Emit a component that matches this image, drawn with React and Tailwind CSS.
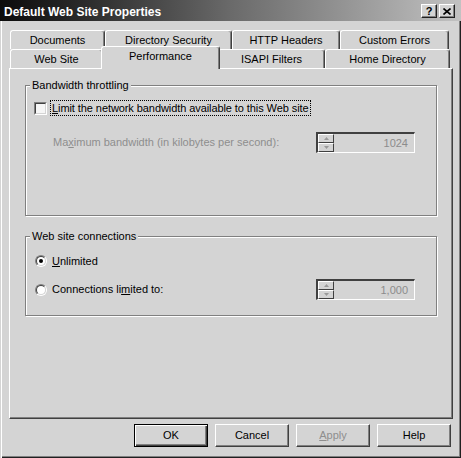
import React from "react";

// Win2000 style property sheet, grayscale

const SpinBtn = ({ up }) => (
  <div className="h-[9px] w-[16px] flex items-center justify-center bg-[#d4d4d4] border-t border-l border-r border-b border-t-white border-l-white border-r-[#404040] border-b-[#404040]">
    <svg width="5" height="3" viewBox="0 0 5 3">
      {up ? <path d="M2.5 0 L5 3 L0 3 Z" fill="#9a9a9a" /> : <path d="M0 0 L5 0 L2.5 3 Z" fill="#9a9a9a" />}
    </svg>
  </div>
);

const Spinner = ({ value }) => (
  <div className="ml-auto mr-[21px] w-[99px] h-[21px] flex border-t-2 border-l-2 border-t-[#404040] border-l-[#404040] border-r border-b border-r-white border-b-white">
    <div className="flex flex-col">
      <SpinBtn up />
      <SpinBtn />
    </div>
    <div className="flex-1 text-right pr-[6px] text-[#8c8c8c] text-[11px] leading-[18px]">{value}</div>
  </div>
);

const Radio = ({ checked }) => (
  <div className="w-[12px] h-[12px] rounded-full border border-t-[#808080] border-l-[#808080] border-b-white border-r-white flex items-center justify-center">
    <div className="w-[10px] h-[10px] rounded-full bg-white border border-t-[#404040] border-l-[#404040] border-b-[#d4d4d4] border-r-[#d4d4d4] flex items-center justify-center">
      {checked && <div className="w-[4px] h-[4px] rounded-full bg-black" />}
    </div>
  </div>
);

const Tab = ({ label, w, selected }) => {
  if (selected) {
    return (
      <div
        className={`${w} relative z-10 -mx-[2px] -mb-[1px] h-[23px] bg-[#d4d4d4] border-t border-l border-r border-t-white border-l-white border-r-[#404040] rounded-t-[3px] shadow-[inset_-1px_0_0_#808080] text-center text-[11px] leading-[13px] pt-[3px]`}
      >
        {label}
      </div>
    );
  }
  return (
    <div
      className={`${w} h-[19px] bg-[#d4d4d4] border-t border-l border-r border-t-white border-l-white border-r-[#404040] rounded-t-[3px] shadow-[inset_-1px_0_0_#808080] text-center text-[11px] leading-[13px] pt-[3px]`}
    >
      {label}
    </div>
  );
};

const Button = ({ children, isDefault, disabled }) => (
  <button
    className={`w-[74px] h-[23px] text-[11px] leading-[13px] bg-[#d4d4d4] ${
      isDefault
        ? "border border-black shadow-[inset_1px_1px_0_#fff,inset_-1px_-1px_0_#404040,inset_-2px_-2px_0_#808080]"
        : "border border-t-white border-l-white border-r-[#404040] border-b-[#404040] shadow-[inset_-1px_-1px_0_#808080]"
    } ${disabled ? "text-[#8e8e8e]" : "text-black"}`}
  >
    {children}
  </button>
);

export default function App() {
  return (
    <div className="w-[461px] h-[458px] overflow-hidden bg-[#d4d4d4] font-['Liberation_Sans',Arial,sans-serif] text-black shadow-[inset_1px_0_0_#d4d4d4,inset_2px_0_0_#fff,inset_-1px_-1px_0_#202020,inset_-2px_-2px_0_#808080] flex flex-col">
      {/* title bar */}
      <div className="h-[21px] flex items-center bg-gradient-to-r from-[#0c0c0c] via-[#6a6a6a] to-[#c2c2c2]">
        <span className="ml-[4px] mt-[2px] text-white font-bold text-[12px] leading-[14px]">Default Web Site Properties</span>
        <div className="ml-auto mr-[6px] mt-[1px] flex gap-[2px]">
          <div className="w-[16px] h-[14px] bg-[#d4d4d4] border border-t-white border-l-white border-r-[#202020] border-b-[#202020] shadow-[inset_-1px_-1px_0_#808080] flex items-center justify-center text-[11px] font-bold leading-[11px]">
            ?
          </div>
          <div className="w-[16px] h-[14px] bg-[#d4d4d4] border border-t-white border-l-white border-r-[#202020] border-b-[#202020] shadow-[inset_-1px_-1px_0_#808080] flex items-center justify-center">
            <svg width="8" height="7" viewBox="0 0 8 7">
              <path d="M0.5 0.5 L7.5 6.5 M7.5 0.5 L0.5 6.5" stroke="#000" strokeWidth="1.6" />
            </svg>
          </div>
        </div>
      </div>

      <div className="pl-[9px] pt-[9px]">
        {/* tabs back row */}
        <div className="flex ml-[1px] h-[19px]">
          <Tab label="Documents" w="w-[95px]" />
          <Tab label="Directory Security" w="w-[127px]" />
          <Tab label="HTTP Headers" w="w-[108px]" />
          <Tab label="Custom Errors" w="w-[109px]" />
        </div>
        {/* tabs front row */}
        <div className="flex items-end ml-[1px] h-[19px]">
          <Tab label="Web Site" w="w-[93px]" />
          <Tab label="Performance" w="w-[119px]" selected />
          <Tab label="ISAPI Filters" w="w-[107px]" />
          <Tab label="Home Directory" w="w-[125px]" />
        </div>

        {/* panel */}
        <div className="w-[444px] h-[351px] border-t border-l border-r border-b border-t-white border-l-white border-r-[#404040] border-b-[#404040] shadow-[inset_-1px_-1px_0_#808080] pl-[15px] pt-[10px]">
          <fieldset className="w-[412px] h-[137px] border border-[#808080] shadow-[1px_1px_0_#fff,inset_1px_1px_0_#fff]">
            <legend className="ml-[4px] px-[2px] text-[11px] leading-[13px] bg-[#d4d4d4]">Bandwidth throttling</legend>
            <div className="mt-[8px] h-[16px] flex items-center pl-[8px]">
              <div className="w-[13px] h-[13px] border border-t-[#808080] border-l-[#808080] border-b-white border-r-white">
                <div className="w-full h-full bg-[#f6f6f6] border border-t-[#404040] border-l-[#404040] border-b-[#d4d4d4] border-r-[#d4d4d4]" />
              </div>
              <span className="ml-[3px] px-[1px] border border-dotted border-black text-[11px] leading-[14px] tracking-[-0.08px]">
                <span className="underline">L</span>imit the network bandwidth available to this Web site
              </span>
            </div>
            <div className="mt-[16px] h-[21px] flex items-center">
              <span className="ml-[27px] text-[11px] leading-[13px] text-[#8e8e8e]">
                Ma<span className="underline">x</span>imum bandwidth (in kilobytes per second):
              </span>
              <Spinner value="1024" />
            </div>
          </fieldset>

          <fieldset className="mt-[14px] w-[412px] h-[86px] border border-[#808080] shadow-[1px_1px_0_#fff,inset_1px_1px_0_#fff]">
            <legend className="ml-[4px] px-[2px] text-[11px] leading-[13px] bg-[#d4d4d4]">Web site connections</legend>
            <div className="mt-[10px] h-[16px] flex items-center pl-[9px]">
              <Radio checked />
              <span className="ml-[5px] text-[11px] leading-[13px]">
                <span className="underline">U</span>nlimited
              </span>
            </div>
            <div className="mt-[10px] h-[21px] flex items-center pl-[9px]">
              <Radio />
              <span className="ml-[5px] text-[11px] leading-[13px]">
                Connections li<span className="underline">m</span>ited to:
              </span>
              <Spinner value="1,000" />
            </div>
          </fieldset>
        </div>
      </div>

      {/* bottom buttons */}
      <div className="mt-[5px] flex justify-end gap-[7px] pr-[10px]">
        <Button isDefault>OK</Button>
        <Button>Cancel</Button>
        <Button disabled>
          <span className="underline">A</span>pply
        </Button>
        <Button>Help</Button>
      </div>
    </div>
  );
}
